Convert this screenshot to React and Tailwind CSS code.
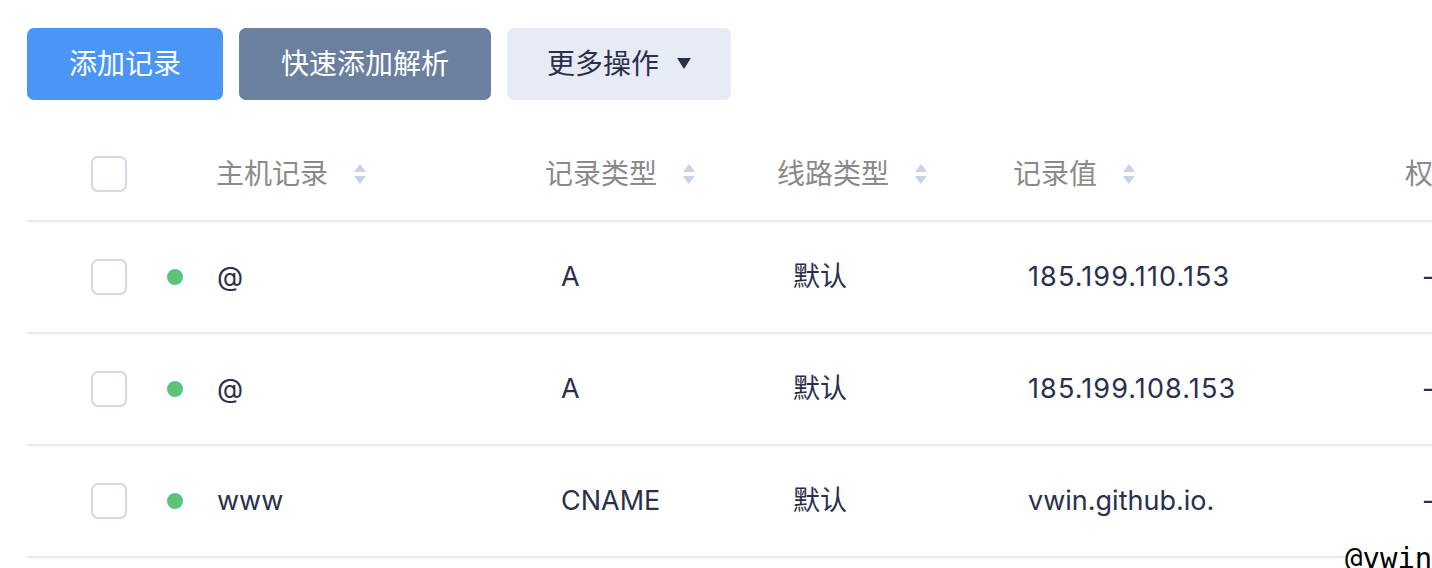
import React from "react";

const FONT = { fontFamily: '"Inter", "Noto Sans CJK SC", sans-serif' };

function SortIcon() {
  return (
    <svg width="12" height="20" viewBox="0 0 12 20" className="ml-[26px] shrink-0">
      <polygon points="6,0 12,8 0,8" fill="#c9d3e6" />
      <polygon points="0,12 12,12 6,20" fill="#c9d3e6" />
    </svg>
  );
}

function Checkbox() {
  return <div className="w-[36px] h-[36px] rounded-[7px] border-2 border-[#d3d8e4] bg-white shrink-0" />;
}

const rows = [
  { host: "@", type: "A", line: "默认", value: "185.199.110.153", ip: true },
  { host: "@", type: "A", line: "默认", value: "185.199.108.153", ip: true },
  { host: "www", type: "CNAME", line: "默认", value: "vwin.github.io.", ip: false },
];

export default function App() {
  return (
    <div className="relative w-[1432px] h-[568px] overflow-hidden bg-white" style={FONT}>
      <div className="pl-[27px] pt-[28px]">
        <div className="flex gap-4">
          <button className="h-[72px] w-[196px] rounded-[7px] bg-[#4a96f7] text-white text-[28px] leading-none">
            添加记录
          </button>
          <button className="h-[72px] w-[252px] rounded-[7px] bg-[#6b809f] text-white text-[28px] leading-none">
            快速添加解析
          </button>
          <button className="h-[72px] w-[224px] rounded-[7px] bg-[#e7ebf5] text-[#2a2f4b] text-[28px] leading-none flex items-center justify-center">
            <span>更多操作</span>
            <svg width="14" height="12" viewBox="0 0 14 12" className="ml-[18px]">
              <polygon points="0,0 14,0 7,11" fill="#2a2f4b" />
            </svg>
          </button>
        </div>

        <div className="mt-[28px] w-[1500px]">
          <div className="flex items-center h-[94px] border-b-2 border-[#e8eaf0] text-[28px] text-[#8a8a8a]">
            <div className="w-[124px] pl-[64px] flex items-center">
              <Checkbox />
            </div>
            <div className="w-[394px] pl-[65px] flex items-center">
              <span>主机记录</span>
              <SortIcon />
            </div>
            <div className="w-[232px] flex items-center">
              <span>记录类型</span>
              <SortIcon />
            </div>
            <div className="w-[236px] flex items-center">
              <span>线路类型</span>
              <SortIcon />
            </div>
            <div className="w-[392px] flex items-center">
              <span>记录值</span>
              <SortIcon />
            </div>
            <div className="flex items-center">
              <span>权重</span>
            </div>
          </div>

          {rows.map((r, i) => (
            <div key={i} className="flex items-center h-[112px] border-b-2 border-[#e8eaf0] text-[27px] text-[#2a2f4b]">
              <div className="w-[124px] pl-[64px] flex items-center">
                <Checkbox />
              </div>
              <div className="w-[394px] pl-[16px] flex items-center">
                <span className="w-[16px] h-[16px] rounded-full bg-[#5cc27c] shrink-0" />
                <span className="ml-[34px]">{r.host}</span>
              </div>
              <div className="w-[232px] pl-[16px]">{r.type}</div>
              <div className="w-[236px] pl-[16px]">{r.line}</div>
              <div className={r.ip ? "w-[392px] pl-[15px] tracking-[1.1px]" : "w-[392px] pl-[15px]"}>{r.value}</div>
              <div className="pl-[17px]">-</div>
            </div>
          ))}
        </div>
      </div>

      <div
        className="absolute left-[1345px] top-[540px] bg-white text-black text-[29px] leading-[36px] whitespace-nowrap"
        style={{ fontFamily: '"DejaVu Sans Mono", monospace' }}
      >
        @vwin
      </div>
    </div>
  );
}
